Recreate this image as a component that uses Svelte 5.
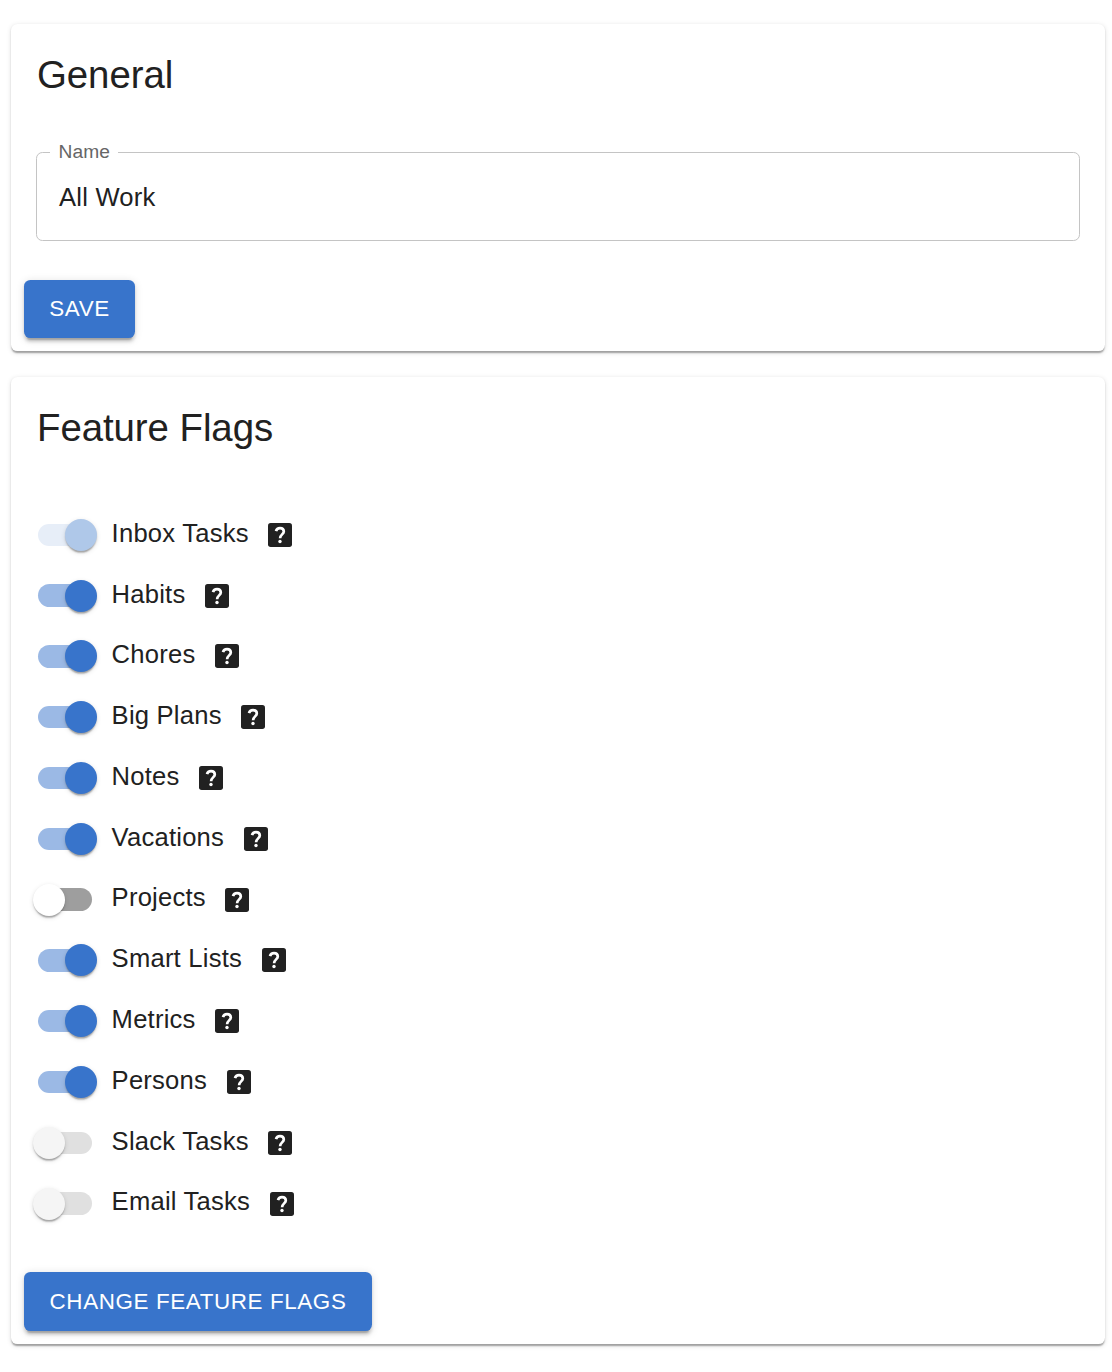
<script>
  const flags = [
    { label: 'Inbox Tasks', on: true, disabled: true },
    { label: 'Habits', on: true },
    { label: 'Chores', on: true },
    { label: 'Big Plans', on: true },
    { label: 'Notes', on: true },
    { label: 'Vacations', on: true },
    { label: 'Projects', on: false },
    { label: 'Smart Lists', on: true },
    { label: 'Metrics', on: true },
    { label: 'Persons', on: true },
    { label: 'Slack Tasks', on: false, disabled: true },
    { label: 'Email Tasks', on: false, disabled: true },
  ];
</script>

<main>
  <section class="card">
    <h2>General</h2>
    <fieldset class="field">
      <legend>Name</legend>
      <div class="value">All Work</div>
    </fieldset>
    <button class="save">Save</button>
  </section>

  <section class="card">
    <h2>Feature Flags</h2>
    <div class="flags">
      {#each flags as flag}
        <div class="row">
          <span class="switch" class:on={flag.on} class:disabled={flag.disabled}>
            <span class="track"></span>
            <span class="thumb"></span>
          </span>
          <span class="label">{flag.label}</span>
          <svg class="help" viewBox="0 0 24 24" aria-hidden="true">
            <rect width="24" height="24" rx="2.7" />
            <path d="M8 8.2C8.5 6.2 10 5.1 12 5.1c2.3 0 3.8 1.4 3.8 3.4 0 2.8-3.7 3.1-3.7 6.7" />
            <circle cx="12" cy="18.5" r="1.7" />
          </svg>
        </div>
      {/each}
    </div>
    <button class="change">Change Feature Flags</button>
  </section>
</main>

<style>
  :global(body) {
    background: #fff;
  }
  main {
    display: flex;
    flex-direction: column;
    gap: 26px;
    padding: 24px 7px 28px 11px;
    font-family: "Liberation Sans", Arial, sans-serif;
    color: #212121;
  }
  .card {
    display: flex;
    flex-direction: column;
    align-items: flex-start;
    box-sizing: border-box;
    width: 1094px;
    height: 327px;
    padding: 25px 25px 13px 13px;
    border-radius: 6.4px;
    background: #fff;
    box-shadow:
      0 3.2px 1.6px -1.6px rgba(0, 0, 0, 0.2),
      0 1.6px 1.6px rgba(0, 0, 0, 0.14),
      0 1.6px 4.8px rgba(0, 0, 0, 0.12);
  }
  .card + .card {
    height: 967px;
  }
  h2 {
    margin: 0 0 0 13px;
    font-size: 38.4px;
    font-weight: 400;
    line-height: 51px;
    letter-spacing: -0.06px;
    white-space: nowrap;
  }
  .field {
    box-sizing: border-box;
    width: 1044px;
    height: 101px;
    margin: 40px 0 0 12px;
    padding: 0 22px;
    border: 1px solid #c4c4c4;
    border-radius: 6.4px;
  }
  legend {
    margin-left: -9px;
    padding: 0 8.5px 2px 8.5px;
    font-size: 19.2px;
    line-height: 23px;
    letter-spacing: 0.05px;
    color: #666;
  }
  .value {
    padding-top: 16px;
    font-size: 25.6px;
    line-height: 32px;
    letter-spacing: 0.22px;
  }
  button {
    height: 58px;
    margin-top: auto;
    padding: 0;
    border: 0;
    border-radius: 6.4px;
    background: #3874cb;
    color: #fff;
    font: 22.4px "Liberation Sans", Arial, sans-serif;
    letter-spacing: 0.62px;
    text-transform: uppercase;
    white-space: nowrap;
    box-shadow:
      0 4.8px 1.6px -3.2px rgba(0, 0, 0, 0.2),
      0 3.2px 3.2px rgba(0, 0, 0, 0.14),
      0 1.6px 8px rgba(0, 0, 0, 0.12);
  }
  .save {
    width: 111px;
  }
  .change {
    width: 348px;
    height: 59px;
  }
  .flags {
    margin: 51.5px 0 0 9px;
  }
  .row {
    display: flex;
    align-items: center;
    height: 60.8px;
  }
  .switch {
    display: grid;
    align-items: center;
    width: 64px;
    height: 32px;
    margin-right: 14.6px;
  }
  .track,
  .thumb {
    grid-area: 1 / 1;
  }
  .track {
    width: 54px;
    height: 22.4px;
    margin-left: 5px;
    border-radius: 12px;
    background: #9e9e9e;
  }
  .thumb {
    width: 32px;
    height: 32px;
    border-radius: 50%;
    background: #fff;
    box-shadow:
      0 3.2px 1.6px -1.6px rgba(0, 0, 0, 0.2),
      0 1.6px 1.6px rgba(0, 0, 0, 0.14),
      0 1.6px 4.8px rgba(0, 0, 0, 0.12);
  }
  .on .track {
    background: #9bb9e5;
  }
  .on .thumb {
    margin-left: 32px;
    background: #3874cb;
  }
  .disabled .track {
    background: #e0e0e0;
  }
  .disabled .thumb {
    background: #f5f5f5;
  }
  .on.disabled .track {
    background: #e7eef8;
  }
  .on.disabled .thumb {
    background: #afc8e9;
  }
  .label {
    padding-bottom: 4.4px;
    font-size: 25.6px;
    line-height: 38px;
    letter-spacing: 0.22px;
    white-space: nowrap;
  }
  .help {
    width: 24px;
    height: 24px;
    margin-left: 19.6px;
  }
  .help rect {
    fill: #212121;
  }
  .help path {
    fill: none;
    stroke: #fff;
    stroke-width: 2.7;
  }
  .help circle {
    fill: #fff;
  }
</style>
